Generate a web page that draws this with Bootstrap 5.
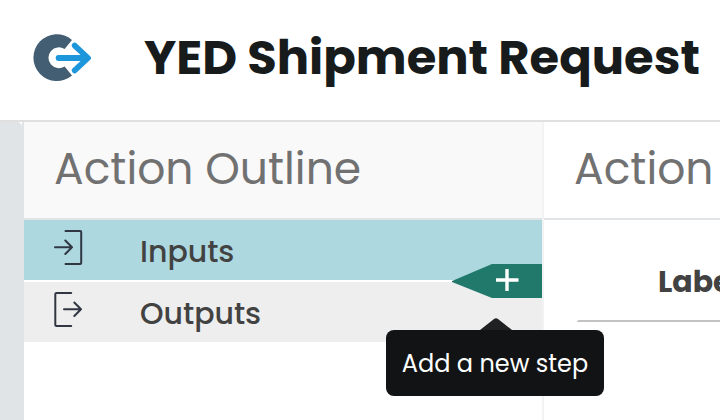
<!DOCTYPE html>
<html lang="en">
<head>
<meta charset="utf-8">
<meta name="viewport" content="width=device-width, initial-scale=1">
<title>YED Shipment Request</title>
<link href="https://cdn.jsdelivr.net/npm/bootstrap@5.3.0/dist/css/bootstrap.min.css" rel="stylesheet">
<style>
body{font-family:Poppins,Inter,"Open Sans",sans-serif;background:#fff;height:420px}
.app{width:720px;height:420px}
.topbar{height:122px;border-bottom:2px solid #e0e0e0;padding-left:30px}
.brand-mark{width:64px;height:56px;margin-top:-4px}
.page-title{font-size:48px;font-weight:700;line-height:60px;color:#171b1c;margin-left:50px;margin-top:-4px}
.rail-wrap{width:24px;background:#fff;border-right:2px solid #e0e4e7}
.rail{width:22px;background:#e0e4e7;border-top-right-radius:5px}
.outline{width:520px;border-right:2px solid #f1f3f4}
.panel-head{height:98px;border-bottom:2px solid #e0e4e7;padding-left:30px;font-size:44px;line-height:93px;color:#717171}
.outline .panel-head{background:#f9f9f9}
.step{height:60px;padding-left:28px;font-size:30px;font-weight:500;line-height:60px;color:#424242}
.step svg{width:32px;height:40px;margin-top:-5px}
.step span{margin-left:56px;padding-top:3px}
.step-in{background:#add8e0;margin-bottom:2px}
.step-out{background:#eee}
.add-step{right:0;top:142px;width:90px;height:34px}
.add-tip{left:386px;top:330px;width:218px;height:66px;background:#121315;color:#fff;border-radius:8px;font-size:24px;line-height:68px}
.add-tip svg{left:94px;top:-12px;width:32px;height:12px}
.field-label{padding:42px 0 0 114px;font-size:30px;font-weight:700;line-height:40px;color:#424242}
.field-rule{height:2px;margin:18px 0 0 33px;background:#c3c3c3;border-top-left-radius:2px}
</style>
<script src="https://cdn.jsdelivr.net/npm/bootstrap@5.3.0/dist/js/bootstrap.bundle.min.js"></script>
</head>
<body class="overflow-hidden">
<div class="app d-flex flex-column position-relative overflow-hidden">
  <header class="topbar d-flex align-items-center flex-shrink-0">
    <svg class="brand-mark flex-shrink-0" viewBox="29.5 30 64 56">
      <path d="M71.5 39.9A23.4 23.4 0 1 0 71.5 75.5L64.1 66.4A10.4 10.4 0 1 1 64.1 49.1Z" fill="#435d72"/>
      <path d="M58.1 58H86M74.2 45.6L87.5 58L74.2 70.4" fill="none" stroke="#1d96dc" stroke-width="5.8" stroke-linecap="round" stroke-linejoin="round"/>
    </svg>
    <h1 class="page-title mb-0 text-nowrap">YED Shipment Request</h1>
  </header>
  <main class="d-flex flex-grow-1">
    <div class="rail-wrap d-flex flex-shrink-0"><div class="rail"></div></div>
    <section class="outline flex-shrink-0 position-relative">
      <h2 class="panel-head mb-0 fw-normal text-nowrap">Action Outline</h2>
      <div class="step step-in d-flex align-items-center">
        <svg viewBox="52 228 32 40" fill="none" stroke="#303743" stroke-width="2" stroke-linecap="round" stroke-linejoin="round"><path d="M65.5 231H80.2Q81.2 231 81.2 232V263Q81.2 264 80.2 264H65.5M55 247.3H72M65.3 240.5L72 247.3L65.3 254"/></svg>
        <span>Inputs</span>
      </div>
      <div class="step step-out d-flex align-items-center">
        <svg viewBox="52 290 32 40" fill="none" stroke="#303743" stroke-width="2" stroke-linecap="round" stroke-linejoin="round"><path d="M71.2 293H56.5Q55.3 293 55.3 294V325Q55.3 326 56.5 326H71.2M64 309.3H81M74.3 302.5L81 309.3L74.3 316"/></svg>
        <span>Outputs</span>
      </div>
      <svg class="add-step position-absolute" viewBox="0 0 90 34"><path d="M0 17L40 0H90V34H40L0 18Z" fill="#20796b"/><path d="M44 16H66.5M55 5V27" stroke="#fff" stroke-width="3.4"/></svg>
    </section>
    <section class="flex-grow-1 overflow-hidden">
      <h2 class="panel-head mb-0 fw-normal text-nowrap">Action</h2>
      <div class="field-label text-nowrap">Label</div>
      <div class="field-rule"></div>
    </section>
  </main>
  <div class="add-tip position-absolute text-center text-nowrap" role="tooltip">
    <svg class="position-absolute" viewBox="0 0 32 12"><path d="M0 12L14 1Q16-.7 18 1L32 12Z" fill="#202122"/></svg>
    <span>Add a new step</span>
  </div>
</div>
</body>
</html>
